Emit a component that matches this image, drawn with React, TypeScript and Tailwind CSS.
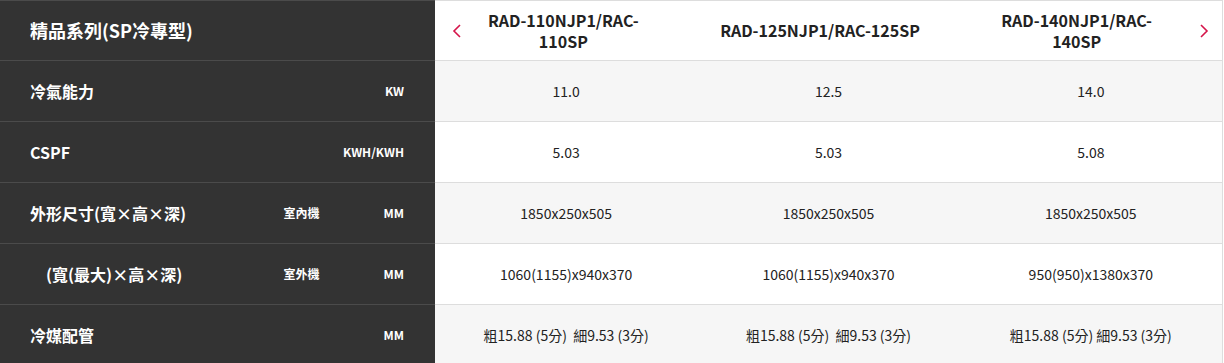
// Spec comparison table (SP cooling series)
import React from 'react';

type Row = {
  label: string;
  sub?: string;
  unit: string;
  indent?: boolean;
  values: React.ReactNode[];
};

const rows: Row[] = [
  { label: '冷氣能力', unit: 'KW', values: ['11.0', '12.5', '14.0'] },
  { label: 'CSPF', unit: 'KWH/KWH', values: ['5.03', '5.03', '5.08'] },
  {
    label: '外形尺寸(寬×高×深)',
    sub: '室內機',
    unit: 'MM',
    values: ['1850x250x505', '1850x250x505', '1850x250x505'],
  },
  {
    label: '(寬(最大)×高×深)',
    sub: '室外機',
    unit: 'MM',
    indent: true,
    values: ['1060(1155)x940x370', '1060(1155)x940x370', '950(950)x1380x370'],
  },
  {
    label: '冷媒配管',
    unit: 'MM',
    values: [
      '粗15.88 (5分)\u00a0\u00a0細9.53 (3分)',
      '粗15.88 (5分)\u00a0\u00a0細9.53 (3分)',
      '粗15.88 (5分) 細9.53 (3分)',
    ],
  },
];

const Chevron = ({ dir }: { dir: 'left' | 'right' }) => (
  <svg width="10" height="14" viewBox="0 0 10 14" fill="none">
    <path
      d={dir === 'left' ? 'M8 1 L2 7 L8 13' : 'M2 1 L8 7 L2 13'}
      stroke="#d5144a"
      strokeWidth="1.6"
    />
  </svg>
);

export default function App() {
  return (
    <div
      className="w-[1224px] h-[363px] overflow-hidden bg-white flex"
      style={{ fontFamily: '"Noto Sans CJK TC", "Noto Sans", sans-serif' }}
    >
      {/* Left label column */}
      <div className="w-[435px] shrink-0 bg-[#333333] text-white flex flex-col">
        <div className="h-[61px] shrink-0 border-t border-b border-[#4b4b4b] flex items-center pl-[30px]">
          <span className="text-[18px] font-bold">精品系列(SP冷專型)</span>
        </div>
        {rows.map((r, i) => (
          <div
            key={i}
            className="h-[61px] shrink-0 border-b border-[#4b4b4b] flex items-center pl-[30px] pr-[31px]"
          >
            <span className={`text-[16px] font-bold flex-1 ${r.indent ? 'pl-[16px]' : ''}`}>
              {r.label}
            </span>
            {r.sub && (
              <span className="text-[12px] font-bold w-[100px]">{r.sub}</span>
            )}
            <span className="text-[12px] font-bold text-right">{r.unit}</span>
          </div>
        ))}
      </div>

      {/* Right values */}
      <div className="w-[788px] shrink-0 flex flex-col border-r border-[#dddddd] text-[#222222]">
        <div className="h-[61px] shrink-0 border-t border-b border-[#dddddd] bg-white relative grid grid-cols-3 pr-[17px]">
          <div className="absolute left-[17px] top-[23px]">
            <Chevron dir="left" />
          </div>
          <div className="absolute right-[13px] top-[23px]">
            <Chevron dir="right" />
          </div>
          <div className="flex items-center justify-center text-center text-[16px] font-bold leading-[21px]">
            RAD-110NJP1/RAC-
            <br />
            110SP
          </div>
          <div className="flex items-center justify-center text-center text-[16px] font-bold leading-[21px]">
            RAD-125NJP1/RAC-125SP
          </div>
          <div className="flex items-center justify-center text-center text-[16px] font-bold leading-[21px]">
            RAD-140NJP1/RAC-
            <br />
            140SP
          </div>
        </div>
        {rows.map((r, i) => (
          <div
            key={i}
            className={`h-[61px] shrink-0 border-b border-[#dddddd] grid grid-cols-3 ${
              i % 2 === 0 ? 'bg-[#f6f6f6]' : 'bg-white'
            }`}
          >
            {r.values.map((v, j) => (
              <div key={j} className="flex items-center justify-center text-[14px] whitespace-pre">
                {v}
              </div>
            ))}
          </div>
        ))}
      </div>
    </div>
  );
}
